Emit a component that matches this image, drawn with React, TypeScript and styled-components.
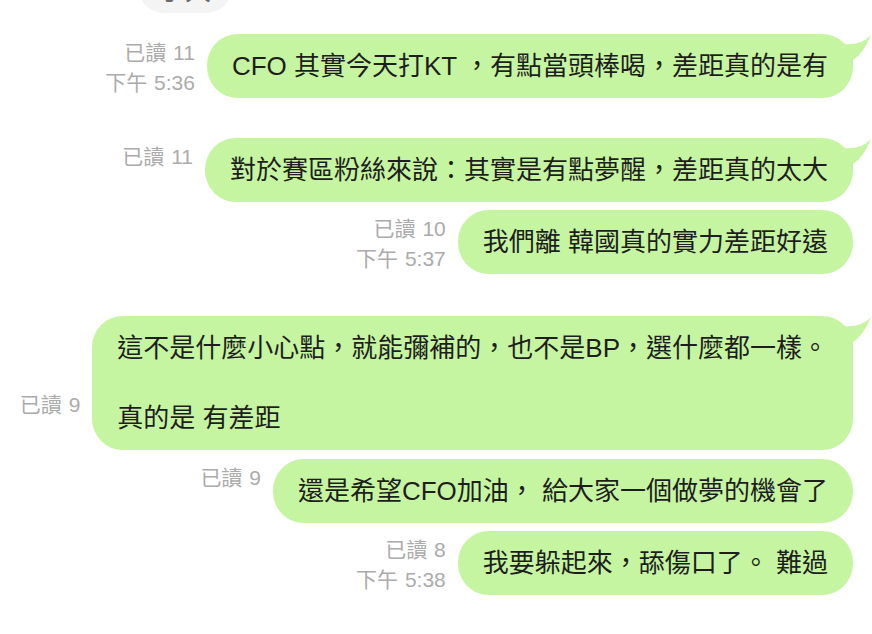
import React from "react";
import styled, { createGlobalStyle } from "styled-components";

const Global = createGlobalStyle`
  html, body { margin: 0; padding: 0; background: #ffffff; }
  body {
    font-family: "Liberation Sans", "Noto Sans CJK TC", sans-serif;
    overflow: hidden;
  }
`;

const GREEN = "#c6f5a1";

const Page = styled.div`
  display: flex;
  flex-direction: column;
  width: 872px;
  height: 634px;
  overflow: hidden;
`;

const IncomingRow = styled.div`
  display: flex;
  justify-content: flex-start;
  padding-left: 138px;
  margin-top: -40px;
`;

const GreyBubble = styled.div`
  background: #f4f4f4;
  border-radius: 26px;
  padding: 14px 21px 4px;
  font-size: 26px;
  line-height: 35px;
  color: #6a6a6a;
`;

const Row = styled.div<{ $top: number }>`
  display: flex;
  justify-content: flex-end;
  align-items: flex-end;
  gap: 12px;
  padding-right: 19px;
  margin-top: ${(p) => p.$top}px;
`;

const Meta = styled.div`
  display: flex;
  flex-direction: column;
  align-items: flex-end;
  font-size: 21px;
  line-height: 30px;
  word-spacing: 1px;
  color: #ababab;
  white-space: nowrap;
`;

const MetaLine = styled.span`
  display: block;
  min-height: 30px;
`;

const Bubble = styled.div`
  position: relative;
  background: ${GREEN};
  border-radius: 31px;
  padding: 14.5px 25px;
  font-size: 26px;
  line-height: 35px;
  color: #1e1e1e;
  white-space: pre-wrap;
  max-width: 720px;
`;

const Tail = styled.svg`
  position: absolute;
  top: -2px;
  right: -20px;
  width: 32px;
  height: 38px;
  overflow: visible;
`;

type Msg = {
  read: string;
  time?: string;
  text: string;
  tail?: boolean;
  top: number;
};

const messages: Msg[] = [
  { read: "已讀 11", time: "下午 5:36", text: "CFO 其實今天打KT ，有點當頭棒喝，差距真的是有", tail: true, top: 21 },
  { read: "已讀 11", text: "對於賽區粉絲來說：其實是有點夢醒，差距真的太大", tail: true, top: 40 },
  { read: "已讀 10", time: "下午 5:37", text: "我們離 韓國真的實力差距好遠", top: 8 },
  {
    read: "已讀 9",
    text: "這不是什麼小心點，就能彌補的，也不是BP，選什麼都一樣。\n\n真的是 有差距",
    tail: true,
    top: 42,
  },
  { read: "已讀 9", text: "還是希望CFO加油， 給大家一個做夢的機會了", top: 9 },
  { read: "已讀 8", time: "下午 5:38", text: "我要躲起來，舔傷口了。 難過", top: 8 },
];

function BubbleTail() {
  return (
    <Tail viewBox="0 0 32 38" aria-hidden="true">
      <path
        d="M2 12 Q20 14 30 3 Q22 22 12 28 L12 36 L0 36 L0 12 Z"
        fill={GREEN}
      />
    </Tail>
  );
}

export default function App() {
  return (
    <>
      <Global />
      <Page>
        <IncomingRow>
          <GreyBubble>了大</GreyBubble>
        </IncomingRow>
        {messages.map((m, i) => (
          <Row key={i} $top={m.top}>
            <Meta>
              <MetaLine>{m.read}</MetaLine>
              <MetaLine>{m.time ?? ""}</MetaLine>
            </Meta>
            <Bubble>
              {m.text}
              {m.tail && <BubbleTail />}
            </Bubble>
          </Row>
        ))}
      </Page>
    </>
  );
}
